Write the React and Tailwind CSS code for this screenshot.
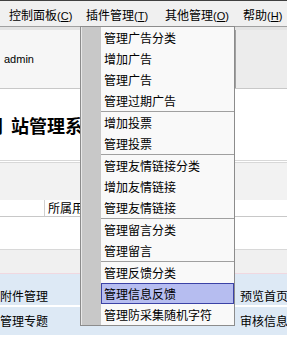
export default function App() {
  const groups = [
    ["管理广告分类", "增加广告", "管理广告", "管理过期广告"],
    ["增加投票", "管理投票"],
    ["管理友情链接分类", "增加友情链接", "管理友情链接"],
    ["管理留言分类", "管理留言"],
    ["管理反馈分类", "管理信息反馈", "管理防采集随机字符"],
  ];
  const font = "font-['Noto_Sans_CJK_SC','Liberation_Sans',sans-serif]";
  const Mn = ({ label, k, w }) => (
    <span className={`whitespace-nowrap shrink-0 ${w}`}>
      {label}
      <span className="font-['Liberation_Sans',sans-serif] text-[11px]">
        (<span className="underline underline-offset-1">{k}</span>)
      </span>
    </span>
  );
  return (
    <div className={`relative w-[287px] h-[340px] overflow-hidden bg-white text-[12px] leading-none text-black ${font}`}>
      {/* top dark line */}
      <div className="h-px bg-[#404040]" />
      {/* menu bar */}
      <div className="h-[25px] bg-[#f0f0f0] flex items-center pt-[3px] pl-[9px] overflow-hidden">
        <Mn label="控制面板" k="C" w="w-[77px]" />
        <Mn label="插件管理" k="T" w="w-[79px]" />
        <Mn label="其他管理" k="O" w="w-[78px]" />
        <Mn label="帮助" k="H" w="w-[40px]" />
      </div>
      {/* under-bar lines */}
      <div className="h-px bg-[#a0a0a0]" />
      <div className="h-[3px] bg-[#e4e4e4]" />
      {/* header row */}
      <div className="flex h-[58px]">
        <div className="w-[235px] bg-[#f6f6f6] flex items-center pl-[4px] text-[11px] font-['Liberation_Sans',sans-serif]">admin</div>
        <div className="flex-1 bg-[#ececec] border-l border-[#a0a0a0]" />
      </div>
      <div className="h-px bg-[#c8c8c8]" />
      {/* heading */}
      <div className="h-[71px] bg-white flex items-center overflow-hidden">
        <div className="ml-[-15px] text-[18px] font-bold whitespace-nowrap">
          <span className="mr-[8px]">网</span>站管理系统
        </div>
      </div>
      <div className="h-px bg-[#d8d8d8]" />
      <div className="h-px bg-white" />
      <div className="h-px bg-[#d8d8d8]" />
      {/* gray band */}
      <div className="h-[37px] bg-[#f2f2f2]" />
      {/* table header row */}
      <div className="flex h-[16px] bg-white">
        <div className="w-[45px] border-r border-[#d0d0d0]" />
        <div className="pl-[3px] flex items-center whitespace-nowrap">所属用户</div>
      </div>
      <div className="h-px bg-[#c8c8c8]" />
      <div className="h-[32px] bg-white" />
      <div className="h-px bg-[#d8d8d8]" />
      <div className="h-[23px] bg-[#f0f0f0]" />
      <div className="h-px bg-[#f0d8e0]" />
      {/* blue rows */}
      <div className="flex h-[31px] bg-[#dde9f5] items-end pb-[3px] justify-between">
        <span className="whitespace-nowrap">附件管理</span>
        <span className="w-[47px] shrink-0 whitespace-nowrap">预览首页</span>
      </div>
      <div className="h-[2px] bg-white" />
      <div className="flex h-[28px] bg-[#dde9f5] items-center justify-between">
        <span className="whitespace-nowrap">管理专题</span>
        <span className="w-[47px] shrink-0 whitespace-nowrap">审核信息</span>
      </div>

      {/* dropdown menu */}
      <div className="absolute left-[80px] top-[26px] w-[155px] border border-[#8c8c8c] bg-[#f9f9f9] flex">
        <div className="w-[20px] bg-[#c8c8c8] border-l border-[#e8e8e8]" />
        <div className="flex-1 flex flex-col">
          {groups.map((g, gi) => (
            <div key={gi} className="flex flex-col">
              {gi > 0 && <div className="h-px bg-[#a0a0a0]" />}
              {g.map((t) =>
                t === "管理信息反馈" ? (
                  <div key={t} className="h-[21px] flex items-center pl-[2px] bg-[#b6bdf0] border border-[#3b42a6]">
                    {t}
                  </div>
                ) : (
                  <div key={t} className="h-[21px] flex items-center pl-[3px]">
                    {t}
                  </div>
                )
              )}
            </div>
          ))}
        </div>
      </div>
    </div>
  );
}
